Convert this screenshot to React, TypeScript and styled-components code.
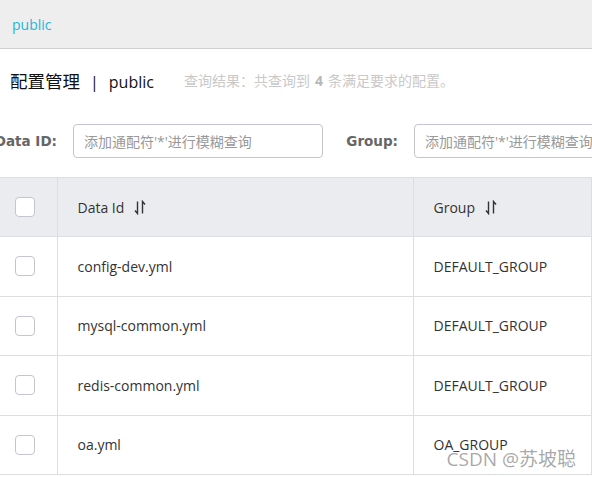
import React from 'react';
import styled, { createGlobalStyle } from 'styled-components';

const GlobalStyle = createGlobalStyle`
  html, body {
    margin: 0;
    padding: 0;
    background: #ffffff;
    overflow: hidden;
  }
  body {
    font-family: "Open Sans", "Noto Sans CJK SC", Arial, sans-serif;
  }
`;

const Page = styled.div`
  position: relative;
  width: 592px;
  height: 477px;
  overflow: hidden;
`;

const TopBar = styled.div`
  height: 48px;
  display: flex;
  align-items: center;
  padding-left: 12px;
  background-color: #eeeeee;
  border-bottom: 1px solid #cfcfcf;
  color: #1eb6d9;
  font-size: 14px;
`;

const TitleRow = styled.div`
  height: 62px;
  display: flex;
  align-items: center;
  padding-left: 10px;
  white-space: nowrap;
`;

const Title = styled.span`
  font-size: 16px;
  color: #111111;
`;

const TitleCjk = styled.span`
  font-size: 17.5px;
`;

const Divider = styled.span`
  margin: 0 10px;
`;

const ResultText = styled.span`
  margin-left: 30px;
  font-size: 14px;
  color: #c9c9c9;

  b {
    color: #b8b8b8;
    margin: 0 5px;
  }
`;

const SearchRow = styled.div`
  display: flex;
  align-items: center;
  padding: 13px 0 19px;
  white-space: nowrap;
`;

const SearchLabel = styled.div<{ width: number; gap: number }>`
  flex: none;
  width: ${(p) => p.width}px;
  margin-right: ${(p) => p.gap}px;
  display: flex;
  justify-content: flex-end;
  font-family: "DejaVu Sans", sans-serif;
  font-size: 13.5px;
  font-weight: bold;
  color: #666666;
`;

const SearchInput = styled.input<{ width: number }>`
  flex: none;
  box-sizing: border-box;
  width: ${(p) => p.width}px;
  height: 34px;
  padding: 0 10px;
  border: 1px solid #c4c6cf;
  border-radius: 4px;
  font-family: "Open Sans", "Noto Sans CJK SC", sans-serif;
  font-size: 14px;
  outline: none;

  &::placeholder {
    color: #999999;
  }
`;

const Table = styled.table`
  width: 592px;
  border-collapse: collapse;
  table-layout: fixed;
  font-size: 14px;
  color: #333333;
`;

const HeadCell = styled.th<{ width?: number }>`
  box-sizing: border-box;
  ${(p) => (p.width ? `width: ${p.width}px;` : '')}
  height: 59px;
  padding: 0 0 0 20px;
  text-align: left;
  font-weight: normal;
  background-color: #ebecf0;
  border-top: 1px solid #dcdee3;
  border-bottom: 1px solid #dcdee3;
  border-right: 1px solid #dcdee3;
  white-space: nowrap;
`;

const Cell = styled.td`
  box-sizing: border-box;
  height: 59.5px;
  padding: 0 0 0 20px;
  border-bottom: 1px solid #dcdee3;
  border-right: 1px solid #dcdee3;
  white-space: nowrap;
`;

const CheckCell = styled(Cell)`
  padding-left: 15px;
`;

const CheckHead = styled(HeadCell)`
  padding-left: 15px;
`;

const Checkbox = styled.span`
  display: block;
  box-sizing: border-box;
  width: 20px;
  height: 20px;
  border: 1px solid #c4c6cf;
  border-radius: 4px;
  background: #ffffff;
`;

const HeadLabel = styled.span`
  display: inline-flex;
  align-items: center;
  gap: 10px;
`;

const Watermark = styled.div`
  position: absolute;
  right: 16px;
  bottom: 5px;
  font-family: "Open Sans", "Noto Sans CJK SC", sans-serif;
  font-size: 19px;
  color: rgba(140, 140, 140, 0.75);
  white-space: nowrap;
`;

const SortIcon = () => (
  <svg width="12" height="15" viewBox="0 0 12 15" fill="none" stroke="#333" strokeWidth="1.4">
    <path d="M3.5 1.5 V13.5 L1 10.5" />
    <path d="M8.5 13.5 V1.5 L11 4.5" />
  </svg>
);

const rows = [
  { id: 'config-dev.yml', group: 'DEFAULT_GROUP' },
  { id: 'mysql-common.yml', group: 'DEFAULT_GROUP' },
  { id: 'redis-common.yml', group: 'DEFAULT_GROUP' },
  { id: 'oa.yml', group: 'OA_GROUP' },
];

const App = (): JSX.Element => (
  <Page>
    <GlobalStyle />
    <TopBar>public</TopBar>
    <TitleRow>
      <Title>
        <TitleCjk>配置管理</TitleCjk>
        <Divider>|</Divider>
        public
      </Title>
      <ResultText>
        查询结果：共查询到<b>4</b>条满足要求的配置。
      </ResultText>
    </TitleRow>
    <SearchRow>
      <SearchLabel width={57} gap={16}>Data ID:</SearchLabel>
      <SearchInput width={250} placeholder="添加通配符'*'进行模糊查询" />
      <SearchLabel width={75} gap={16}>Group:</SearchLabel>
      <SearchInput width={250} placeholder="添加通配符'*'进行模糊查询" />
    </SearchRow>
    <Table>
      <thead>
        <tr>
          <CheckHead width={57}>
            <Checkbox />
          </CheckHead>
          <HeadCell width={356}>
            <HeadLabel>
              Data Id
              <SortIcon />
            </HeadLabel>
          </HeadCell>
          <HeadCell>
            <HeadLabel>
              Group
              <SortIcon />
            </HeadLabel>
          </HeadCell>
        </tr>
      </thead>
      <tbody>
        {rows.map((row) => (
          <tr key={row.id}>
            <CheckCell>
              <Checkbox />
            </CheckCell>
            <Cell>{row.id}</Cell>
            <Cell>{row.group}</Cell>
          </tr>
        ))}
      </tbody>
    </Table>
    <Watermark>CSDN @苏坡聪</Watermark>
  </Page>
);

export default App;
